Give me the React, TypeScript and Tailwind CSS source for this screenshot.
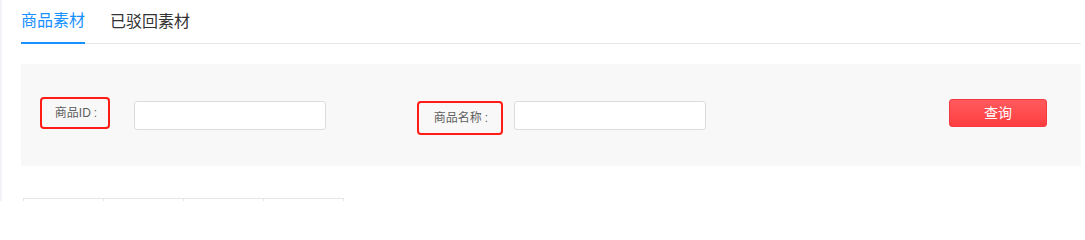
const tabs = ["商品素材", "已驳回素材"];

export default function App() {
  return (
    <div
      className="flex h-[201px] w-[1085px] overflow-hidden bg-white text-[#333]"
      style={{ fontFamily: '"Liberation Sans", "Noto Sans CJK SC", sans-serif' }}
    >
      {/* left edge strip */}
      <div className="w-[2px] shrink-0 bg-[#f2f3f7]" />

      <div className="flex-1 pl-[19px] pr-[4px]">
        {/* Tabs */}
        <div className="flex h-[44px] items-stretch gap-[25px] border-b border-[#e8e8e8]">
          {tabs.map((t, i) => (
            <div
              key={t}
              className={
                i === 0
                  ? "-mb-px flex items-center border-b-2 border-[#1890ff] text-[16px] text-[#1890ff]"
                  : "flex items-center text-[16px] text-[#333]"
              }
            >
              {t}
            </div>
          ))}
        </div>

        {/* Search panel */}
        <div className="mt-[20px] flex h-[102px] items-start bg-[#f8f8f8]">
          <span className="ml-[19px] mt-[33px] flex h-[32px] w-[70px] items-center justify-center rounded-[4px] border-2 border-[#ff1c14] pl-[2px] text-[12px] text-[#5f5f5f]">
            商品ID<span className="ml-[3px]">:</span>
          </span>
          <input className="ml-[24px] mt-[37px] h-[29px] w-[192px] rounded-[3px] border border-[#dcdcdc] bg-white outline-none" />

          <span className="ml-[91px] mt-[37px] flex h-[34px] w-[86px] items-center justify-center rounded-[4px] border-2 border-[#ff1c14] pl-[2px] text-[12px] text-[#5f5f5f]">
            商品名称<span className="ml-[3px]">:</span>
          </span>
          <input className="ml-[11px] mt-[37px] h-[29px] w-[192px] rounded-[3px] border border-[#dcdcdc] bg-white outline-none" />

          <button className="ml-[243px] mt-[35px] flex h-[28px] w-[98px] items-center justify-center rounded-[3px] border border-[#f23b40] bg-gradient-to-b from-[#ff5a5e] to-[#ff3c3f] text-[14px] text-white">
            查询
          </button>
        </div>

        {/* Table header (cut off) */}
        <div className="ml-[2px] mt-[32px] flex">
          {[0, 1, 2, 3].map((c) => (
            <div
              key={c}
              className={
                c === 0
                  ? "h-[40px] w-[81px] border border-[#e6e6e6]"
                  : "-ml-px h-[40px] w-[81px] border border-[#e6e6e6]"
              }
            />
          ))}
        </div>
      </div>
    </div>
  );
}
